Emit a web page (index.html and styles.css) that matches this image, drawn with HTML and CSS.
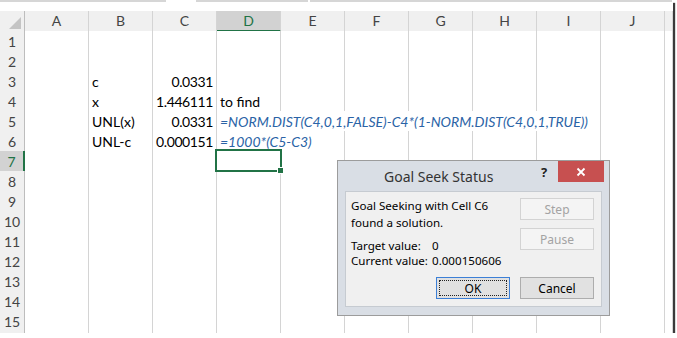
FILE: index.html
```html
<!DOCTYPE html>
<html>
<head>
<meta charset="utf-8">
<link rel="stylesheet" href="styles.css">
</head>
<body>
<div class="frame">
  <div class="topstrip"><i class="s1"></i><i class="s2"></i><i class="s3"></i></div>
  <div class="sheet">
    <div class="row hdr">
      <div class="corner"><svg width="12" height="12" viewBox="0 0 12 12"><polygon points="12,0 12,12 0,12" fill="#c4c4c4"/></svg></div>
      <div class="ch">A</div><div class="ch">B</div><div class="ch">C</div><div class="ch csel">D</div><div class="ch">E</div><div class="ch">F</div><div class="ch">G</div><div class="ch">H</div><div class="ch">I</div><div class="ch">J</div><div class="ch"></div>
    </div>
    <div class="row"><div class="rh">1</div><span></span><span></span><span></span><span></span><span></span><span></span><span></span><span></span><span></span><span></span><span></span></div>
    <div class="row"><div class="rh">2</div><span></span><span></span><span></span><span></span><span></span><span></span><span></span><span></span><span></span><span></span><span></span></div>
    <div class="row"><div class="rh">3</div><span></span><span>c</span><span class="num">0.0331</span><span></span><span></span><span></span><span></span><span></span><span></span><span></span><span></span></div>
    <div class="row"><div class="rh">4</div><span></span><span>x</span><span class="num">1.446111</span><span>to find</span><span></span><span></span><span></span><span></span><span></span><span></span><span></span></div>
    <div class="row"><div class="rh">5</div><span></span><span>UNL(x)</span><span class="num">0.0331</span><span class="fx span6">=NORM.DIST(C4,0,1,FALSE)-C4*(1-NORM.DIST(C4,0,1,TRUE))</span><span></span><span></span></div>
    <div class="row"><div class="rh">6</div><span></span><span>UNL-c</span><span class="num">0.000151</span><span class="fx span2">=1000*(C5-C3)</span><span></span><span></span><span></span><span></span><span></span><span></span></div>
    <div class="row"><div class="rh rsel">7</div><span></span><span></span><span></span><span></span><span></span><span></span><span></span><span></span><span></span><span></span><span></span></div>
    <div class="row"><div class="rh">8</div><span></span><span></span><span></span><span></span><span></span><span></span><span></span><span></span><span></span><span></span><span></span></div>
    <div class="row"><div class="rh">9</div><span></span><span></span><span></span><span></span><span></span><span></span><span></span><span></span><span></span><span></span><span></span></div>
    <div class="row"><div class="rh">10</div><span></span><span></span><span></span><span></span><span></span><span></span><span></span><span></span><span></span><span></span><span></span></div>
    <div class="row"><div class="rh">11</div><span></span><span></span><span></span><span></span><span></span><span></span><span></span><span></span><span></span><span></span><span></span></div>
    <div class="row"><div class="rh">12</div><span></span><span></span><span></span><span></span><span></span><span></span><span></span><span></span><span></span><span></span><span></span></div>
    <div class="row"><div class="rh">13</div><span></span><span></span><span></span><span></span><span></span><span></span><span></span><span></span><span></span><span></span><span></span></div>
    <div class="row"><div class="rh">14</div><span></span><span></span><span></span><span></span><span></span><span></span><span></span><span></span><span></span><span></span><span></span></div>
    <div class="row"><div class="rh">15</div><span></span><span></span><span></span><span></span><span></span><span></span><span></span><span></span><span></span><span></span><span></span></div>
    <div class="row partial"><div class="rh"></div><span></span><span></span><span></span><span></span><span></span><span></span><span></span><span></span><span></span><span></span><span></span></div>
  </div>
  <div class="selbox"><span class="handle"></span></div>

  <div class="dialog">
    <div class="titlebar">
      <div class="title">Goal Seek Status</div>
      <div class="help">?</div>
      <div class="close"><svg width="10" height="10" viewBox="0 0 10 10"><path d="M1.5 1.5 L8.5 8.5 M8.5 1.5 L1.5 8.5" stroke="#fff" stroke-width="1.8"/></svg></div>
    </div>
    <div class="panel">
      <div class="top">
        <div class="msg">
          <div class="l1">Goal Seeking with Cell C6</div>
          <div class="l1">found a solution.</div>
          <div class="vals">
            <div class="vrow"><span class="lab">Target value:</span><span>0</span></div>
            <div class="vrow"><span class="lab">Current value:</span><span>0.000150606</span></div>
          </div>
        </div>
        <div class="side">
          <div class="btn dis">Step</div>
          <div class="btn dis">Pause</div>
        </div>
      </div>
      <div class="bottom">
        <div class="btn ok"><span class="focus">OK</span></div>
        <div class="btn">Cancel</div>
      </div>
    </div>
  </div>
</div>
</body>
</html>
```

FILE: styles.css
```css
html, body {
  margin: 0;
  padding: 0;
  background: #fff;
}

.frame {
  position: relative;
  width: 672px;
  height: 333px;
  background: #fff;
  box-shadow: 1px 1px 0 #fff, 3px 3px 1px #3a3a3a;
  overflow: visible;
  font-family: "Lato", "Liberation Sans", sans-serif;
}

.topstrip {
  height: 11px;
  position: relative;
}
.topstrip i {
  position: absolute;
  top: 0;
  height: 2px;
  background: #d6d6d6;
}
.topstrip .s1 { left: 0; width: 166px; }
.topstrip .s2 { left: 196px; width: 112px; }
.topstrip .s3 { left: 310px; width: 362px; }

.sheet {
  display: flex;
  flex-direction: column;
}

.row {
  display: grid;
  grid-template-columns: 25px repeat(10, 64px) 8px;
  height: 20px;
}
.row.partial { height: 3px; }
.row.partial span { border-bottom: none; }

.row > span {
  box-sizing: border-box;
  border-right: 1px solid #d4d4d4;
  border-bottom: 1px solid #d4d4d4;
  font-size: 14px;
  line-height: 19px;
  padding: 1px 3px 0 3px;
  white-space: nowrap;
  color: #000;
  overflow: visible;
  background: #fff;
}
.row > span.num {
  text-align: right;
  letter-spacing: -0.4px;
}
.row > span.fx {
  font-style: italic;
  color: #2a63a6;
}
.span6 { grid-column: span 6; }
.span2 { grid-column: span 2; }

.rh {
  box-sizing: border-box;
  background: #f0f0f0;
  border-right: 1px solid #bdbdbd;
  border-bottom: 1px solid #d4d4d4;
  color: #444;
  font-size: 14px;
  line-height: 19px;
  padding-top: 1px;
  text-align: center;
}
.rh.rsel {
  background: #d2d2d2;
  color: #217346;
  border-right: 2px solid #217346;
}
.partial .rh { border-bottom: none; }

.hdr .corner,
.hdr .ch {
  box-sizing: border-box;
  background: #f0f0f0;
  border-bottom: 1px solid #bdbdbd;
}
.hdr .corner {
  border-right: 1px solid #bdbdbd;
  display: flex;
  align-items: flex-end;
  justify-content: flex-end;
  padding: 0 3px 2px 0;
}
.hdr .ch {
  border-right: 1px solid #d4d4d4;
  color: #444;
  font-size: 14px;
  line-height: 19px;
  text-align: center;
}
.hdr .ch.csel {
  background: #d2d2d2;
  color: #217346;
  border-bottom: 2px solid #217346;
}

.selbox {
  position: absolute;
  left: 215px;
  top: 149px;
  width: 67px;
  height: 23px;
  box-sizing: border-box;
  border: 2px solid #217346;
}
.selbox .handle {
  position: absolute;
  right: -4px;
  bottom: -4px;
  width: 5px;
  height: 5px;
  background: #217346;
  border: 1px solid #fff;
}

/* Dialog */
.dialog {
  position: absolute;
  left: 337px;
  top: 160px;
  width: 273px;
  height: 156px;
  box-sizing: border-box;
  border: 1px solid #9c9c9c;
  background: #d9dee5;
  display: flex;
  flex-direction: column;
  font-family: "Noto Sans", "Open Sans", sans-serif;
  color: #000;
}
.titlebar {
  height: 30px;
  display: flex;
  align-items: flex-start;
}
.title {
  margin-left: 46px;
  margin-top: 6px;
  font-size: 14px;
  color: #333;
  width: 155px;
}
.help {
  font-size: 13px;
  font-weight: bold;
  color: #222;
  margin-left: 2px;
  margin-top: 2px;
}
.close {
  margin-left: auto;
  margin-right: 5px;
  width: 46px;
  height: 21px;
  background: #c75050;
  display: flex;
  align-items: center;
  justify-content: center;
}
.panel {
  margin: 0 7px 8px 7px;
  flex: 1;
  background: #f0f0f0;
  border: 1px solid #c6cbd1;
  display: flex;
  flex-direction: column;
  padding: 5px 7px 7px 5px;
  font-size: 11.6px;
}
.top {
  display: flex;
  justify-content: space-between;
  flex: 1;
}
.msg .l1 {
  line-height: 17px;
  white-space: nowrap;
}
.vals {
  margin-top: 7px;
}
.vrow {
  display: flex;
  line-height: 15px;
  white-space: nowrap;
}
.vrow .lab {
  width: 81px;
}
.side {
  display: flex;
  flex-direction: column;
  gap: 8px;
  padding-top: 1px;
}
.btn {
  box-sizing: border-box;
  width: 74px;
  height: 22px;
  border: 1px solid #adadad;
  background: #e1e1e1;
  display: flex;
  align-items: center;
  justify-content: center;
  font-size: 12px;
}
.btn.dis {
  border-color: #d3d3d3;
  background: #f4f4f4;
  color: #a3a3a3;
}
.bottom {
  display: flex;
  justify-content: flex-end;
  gap: 10px;
}
.btn.ok {
  border-color: #3c7fd6;
  background: #e1e1e1;
  padding: 2px;
}
.btn.ok .focus {
  flex: 1;
  align-self: stretch;
  border: 1px dotted #222;
  display: flex;
  align-items: center;
  justify-content: center;
}
```
